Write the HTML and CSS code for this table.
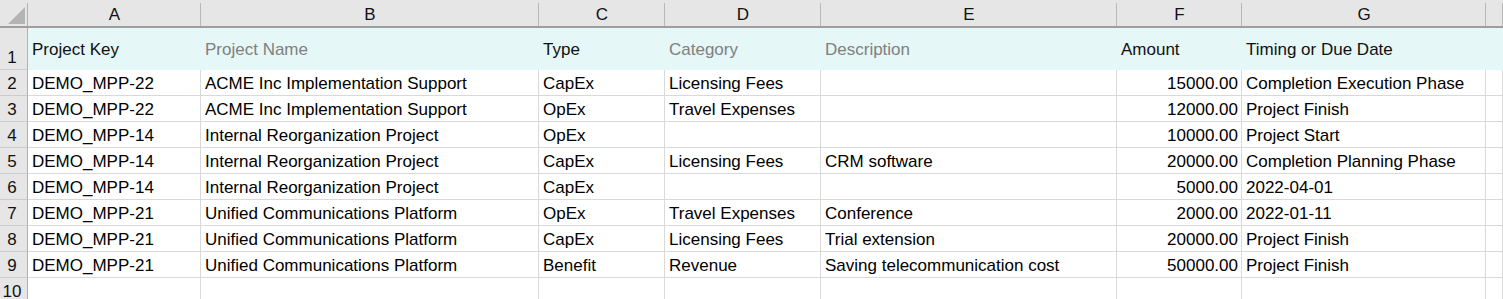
FILE: index.html
```html
<!DOCTYPE html>
<html lang="en">
<head>
<meta charset="utf-8">
<title>Sheet</title>
<link rel="stylesheet" href="styles.css">
</head>
<body>
<div class="sheet">
  <div class="corner"><svg class="tri" width="28" height="26" viewBox="0 0 28 26"><polygon points="8,24 25,24 25,7" fill="#b4b4b4"/></svg></div>
  <div class="col">A</div><div class="col">B</div><div class="col">C</div><div class="col">D</div><div class="col">E</div><div class="col">F</div><div class="col">G</div><div class="col"></div>

  <div class="rh first">1</div>
  <div class="c h">Project Key</div><div class="c h muted">Project Name</div><div class="c h">Type</div><div class="c h muted">Category</div><div class="c h muted">Description</div><div class="c h">Amount</div><div class="c h">Timing or Due Date</div><div class="c h"></div>

  <div class="rh">2</div>
  <div class="c">DEMO_MPP-22</div><div class="c">ACME Inc Implementation Support</div><div class="c">CapEx</div><div class="c">Licensing Fees</div><div class="c"></div><div class="c num">15000.00</div><div class="c">Completion Execution Phase</div><div class="c"></div>

  <div class="rh">3</div>
  <div class="c">DEMO_MPP-22</div><div class="c">ACME Inc Implementation Support</div><div class="c">OpEx</div><div class="c">Travel Expenses</div><div class="c"></div><div class="c num">12000.00</div><div class="c">Project Finish</div><div class="c"></div>

  <div class="rh">4</div>
  <div class="c">DEMO_MPP-14</div><div class="c">Internal Reorganization Project</div><div class="c">OpEx</div><div class="c"></div><div class="c"></div><div class="c num">10000.00</div><div class="c">Project Start</div><div class="c"></div>

  <div class="rh">5</div>
  <div class="c">DEMO_MPP-14</div><div class="c">Internal Reorganization Project</div><div class="c">CapEx</div><div class="c">Licensing Fees</div><div class="c">CRM software</div><div class="c num">20000.00</div><div class="c">Completion Planning Phase</div><div class="c"></div>

  <div class="rh">6</div>
  <div class="c">DEMO_MPP-14</div><div class="c">Internal Reorganization Project</div><div class="c">CapEx</div><div class="c"></div><div class="c"></div><div class="c num">5000.00</div><div class="c">2022-04-01</div><div class="c"></div>

  <div class="rh">7</div>
  <div class="c">DEMO_MPP-21</div><div class="c">Unified Communications Platform</div><div class="c">OpEx</div><div class="c">Travel Expenses</div><div class="c">Conference</div><div class="c num">2000.00</div><div class="c">2022-01-11</div><div class="c"></div>

  <div class="rh">8</div>
  <div class="c">DEMO_MPP-21</div><div class="c">Unified Communications Platform</div><div class="c">CapEx</div><div class="c">Licensing Fees</div><div class="c">Trial extension</div><div class="c num">20000.00</div><div class="c">Project Finish</div><div class="c"></div>

  <div class="rh">9</div>
  <div class="c">DEMO_MPP-21</div><div class="c">Unified Communications Platform</div><div class="c">Benefit</div><div class="c">Revenue</div><div class="c">Saving telecommunication cost</div><div class="c num">50000.00</div><div class="c">Project Finish</div><div class="c"></div>

  <div class="rh">10</div>
  <div class="c"></div><div class="c"></div><div class="c"></div><div class="c"></div><div class="c"></div><div class="c"></div><div class="c"></div><div class="c"></div>
</div>
</body>
</html>
```

FILE: styles.css
```css
html, body {
  margin: 0;
  padding: 0;
  background: #ffffff;
  overflow: hidden;
}

body {
  font-family: "Liberation Sans", Arial, sans-serif;
  font-size: 17px;
  color: #000000;
}

.sheet {
  display: grid;
  grid-template-columns: 28px 173px 338px 126px 156px 296px 125px 244px 1fr;
  grid-template-rows: 28px 42px repeat(9, 26px);
  width: 1503px;
}

.sheet > div {
  box-sizing: border-box;
  min-width: 0;
  overflow: hidden;
  white-space: nowrap;
}

.corner {
  background: linear-gradient(#b1b1b1, #b1b1b1) no-repeat right 0 top 3px / 1px 100%, #e6e6e6;
  border-bottom: 2px solid #9e9e9e;
}

.tri {
  display: block;
}

.col {
  background: linear-gradient(#b8b8b8, #b8b8b8) no-repeat right 0 top 3px / 1px 100%, #e6e6e6;
  border-bottom: 2px solid #9e9e9e;
  text-align: center;
  padding-top: 3px;
  line-height: 23px;
  color: #111111;
}

.rh {
  background: #e6e6e6;
  border-right: 1px solid #b1b1b1;
  border-bottom: 1px solid #cbcbcb;
  text-align: center;
  padding-top: 2px;
  padding-right: 3px;
  line-height: 23px;
  color: #111111;
}

.rh.first {
  padding-top: 18px;
}

.c {
  border-right: 1px solid #d9d9d9;
  border-bottom: 1px solid #d9d9d9;
  padding: 2px 3px 0 4px;
  line-height: 23px;
}

.c.h {
  background: #e5f7f7;
  border-color: #e5f7f7;
  line-height: 39px;
  color: #111111;
}

.c.h.muted {
  color: #808080;
}

.num {
  text-align: right;
}
```
